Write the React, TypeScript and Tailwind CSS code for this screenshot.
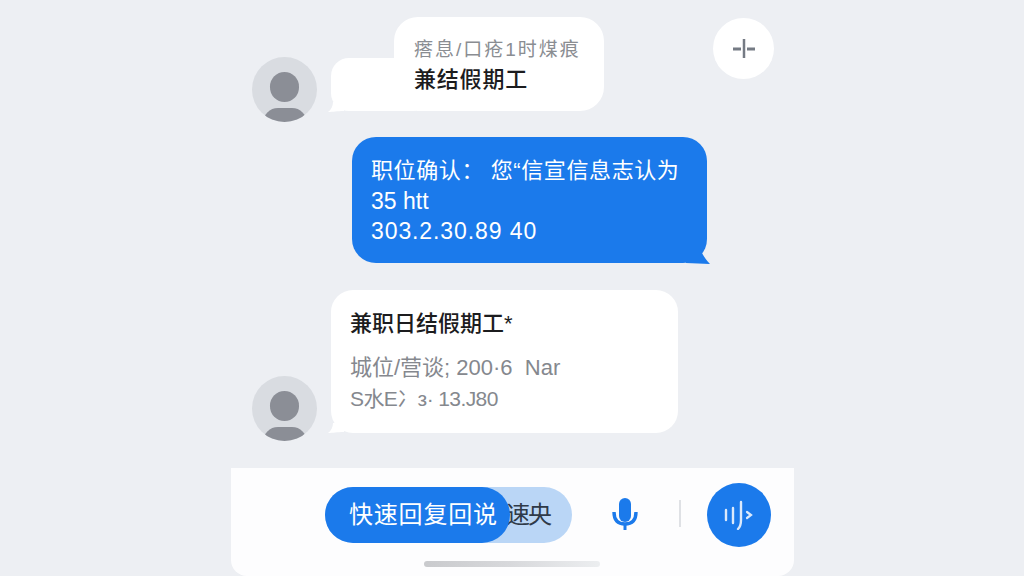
const font = { fontFamily: '"Liberation Sans", "Noto Sans CJK SC", sans-serif' };

function Avatar() {
  return (
    <div className="w-[65px] h-[65px] rounded-full bg-[#d9dce1] shrink-0 overflow-hidden flex flex-col items-center">
      <div className="mt-[15px] w-[29px] h-[30px] shrink-0 rounded-full bg-[#8b8e96]" />
      <div className="mt-[6px] w-[44px] h-[30px] shrink-0 rounded-full bg-[#8b8e96]" />
    </div>
  );
}

function TailLeft({ className }: { className: string }) {
  return (
    <svg className={className} width="16" height="10" viewBox="0 0 16 10">
      <path d="M5 0 C5 4 3 8 0 10 C5 10 9 9 16 9 L16 0 Z" fill="#ffffff" />
    </svg>
  );
}

export default function App() {
  return (
    <div className="w-[1024px] h-[576px] overflow-hidden bg-[#edeff3] flex justify-center" style={font}>
      <div className="w-[563px] ml-px flex flex-col">
        {/* first incoming message */}
        <div className="flex pt-[17px] h-[137px] pl-[21px]">
          <div className="mt-[40px]"><Avatar /></div>
          <div className="relative ml-[77px] w-[210px] h-[94px] bg-white rounded-[24px] pl-[20px] pt-[21px]">
            <div className="absolute left-[-63px] top-[41px] w-[90px] h-[53px] bg-white rounded-l-[18px] rounded-br-[8px]" />
            <TailLeft className="absolute left-[-66px] top-[85px]" />
            <p className="relative text-[19px] leading-[24px] text-[#8a8d92] whitespace-nowrap tracking-[2px]">瘩息/口疮1时煤痕</p>
            <p className="relative text-[22px] leading-[30px] mt-[3px] font-medium text-[#1c1c1e] whitespace-nowrap tracking-[0.8px]">兼结假期工</p>
          </div>
          <div className="ml-[109px] mt-px w-[61px] h-[61px] rounded-full bg-white flex items-center justify-center">
            <svg width="26" height="26" viewBox="0 0 26 26">
              <path d="M2 13 H10 M16 13 H24" stroke="#757b84" strokeWidth="3" />
              <path d="M13 3 V22" stroke="#757b84" strokeWidth="2.5" />
            </svg>
          </div>
        </div>

        {/* outgoing message */}
        <div className="relative ml-[121px] w-[355px] h-[126px] bg-[#1b7aeb] rounded-[24px] pl-[19px] pt-[19px] text-white text-[22px] leading-[30px]">
          <p className="whitespace-nowrap tracking-[0.6px]">职位确认：&nbsp;您“信宣信息志认为</p>
          <p className="whitespace-nowrap text-[23px]">35 htt</p>
          <p className="whitespace-nowrap tracking-[0.9px] text-[23px]">303.2.30.89 40</p>
          <svg className="absolute right-[-3px] bottom-[-1px]" width="24" height="16" viewBox="0 0 24 16">
            <path d="M0 0 H14 C16 6 19 11 24 16 C16 16 8 15 0 15 Z" fill="#1b7aeb" />
          </svg>
        </div>

        {/* second incoming message */}
        <div className="flex mt-[27px] pl-[21px] h-[178px]">
          <div className="mt-[86px]"><Avatar /></div>
          <div className="relative ml-[14px] w-[347px] h-[143px] bg-white rounded-[22px] pl-[19px] pt-[19px]">
            <TailLeft className="absolute left-[-3px] bottom-0" />
            <p className="text-[22px] leading-[30px] font-medium text-[#1c1c1e] whitespace-nowrap">兼职日结假期工*</p>
            <p className="mt-[14px] text-[22px] leading-[30px] text-[#85888e] whitespace-nowrap">城位/营谈; 200·6&nbsp; Nar</p>
            <p className="mt-px text-[21px] leading-[30px] text-[#85888e] whitespace-nowrap tracking-[-0.6px]">S水E冫з· 13.J80</p>
          </div>
        </div>

        {/* input bar */}
        <div className="h-[108px] bg-[#fdfdfe] rounded-b-[16px] flex flex-col">
          <div className="flex items-start h-[93px]">
            <div className="relative ml-[94px] mt-[19px] w-[247px] h-[56px] rounded-full bg-[#bad6f6] flex items-center justify-end pr-[22px] text-[24px] text-[#2f3a48]">
              <span className="tracking-[-2px]">速央</span>
              <div className="absolute left-0 top-0 w-[185px] h-[56px] rounded-full bg-[#1b7aeb] flex items-center pl-[24px] text-white tracking-[0.8px] whitespace-nowrap">
                快速回复回说
              </div>
            </div>
            <svg className="ml-[39px] mt-[29px]" width="28" height="36" viewBox="0 0 28 36" fill="none">
              <rect x="8" y="1" width="12" height="24" rx="6" fill="#1b7aeb" />
              <path d="M3 15 C3 23 7 27 14 27 C21 27 25 23 25 15" stroke="#1b7aeb" strokeWidth="3.4" />
              <path d="M14 27 V33" stroke="#1b7aeb" strokeWidth="3" />
            </svg>
            <div className="ml-[40px] mt-[32px] w-[2px] h-[27px] bg-[#dfe1e5]" />
            <div className="ml-[26px] mt-[15px] w-[64px] h-[64px] rounded-full bg-[#1b7aeb] flex items-center justify-center">
              <svg width="30" height="30" viewBox="0 0 30 30" fill="none" stroke="#dbe9fb" strokeLinecap="round">
                <path d="M2 10 V20" strokeWidth="2.4" />
                <path d="M9 8 V23" strokeWidth="2.4" />
                <path d="M17 2 V20 Q17 26 14 29" strokeWidth="2.4" />
                <path d="M23 12 L27 15 L23 18" strokeWidth="2.2" />
              </svg>
            </div>
          </div>
          <div className="ml-[193px] w-[176px] h-[6px] rounded-full bg-gradient-to-r from-[#c9cacd] via-[#d8d9dc] to-[#eceef0]" />
        </div>
      </div>
    </div>
  );
}
